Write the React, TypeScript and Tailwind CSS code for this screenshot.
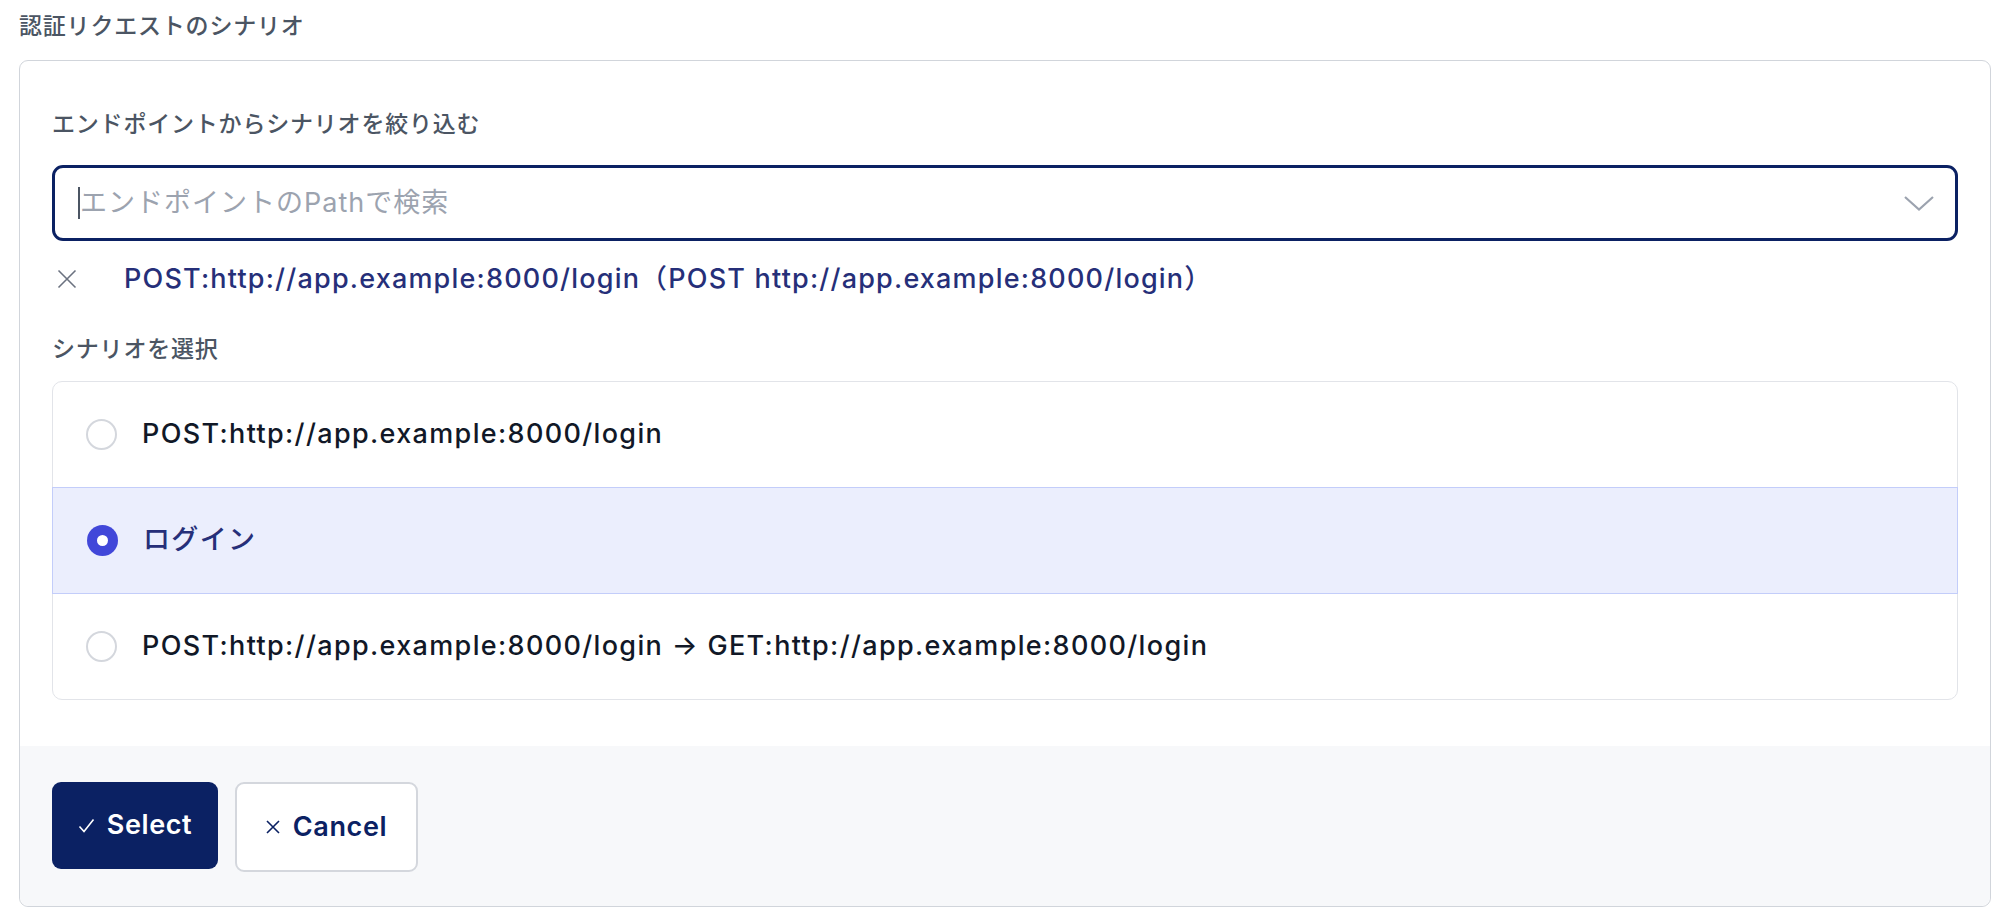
import React from "react";

const FONT = { fontFamily: '"Inter", "Noto Sans CJK JP", sans-serif' };

function Radio({ checked }: { checked: boolean }) {
  if (checked) {
    return (
      <span className="flex h-[31px] w-[31px] shrink-0 items-center justify-center rounded-full bg-[#4147d9]">
        <span className="h-[11px] w-[11px] rounded-full bg-white" />
      </span>
    );
  }
  return <span className="h-[31px] w-[31px] shrink-0 rounded-full border-2 border-[#d4d7dd] bg-white" />;
}

const scenarios = [
  { label: "POST:http://app.example:8000/login", checked: false },
  { label: "ログイン", checked: true },
  { label: "POST:http://app.example:8000/login → GET:http://app.example:8000/login", checked: false },
];

export default function App() {
  return (
    <div className="min-h-[918px] w-[2010px] bg-white pl-[19px] pt-[12px]" style={FONT}>
      <h3 className="mb-[20px] text-[23px] font-medium leading-[28px] tracking-[0.8px] text-[#4b5563]">認証リクエストのシナリオ</h3>

      <div className="w-[1972px] rounded-[9px] border border-[#d1d5db] bg-white">
        <div className="px-[32px] pt-[49px] pb-[46px]">
          <label className="mb-[27px] block text-[23px] font-medium leading-[28px] tracking-[0.8px] text-[#4b5563]">
            エンドポイントからシナリオを絞り込む
          </label>

          <div className="flex h-[76px] items-center rounded-[11px] border-[3px] border-[#0b2163] pl-[23px] pr-[20px]">
            <span className="h-[32px] w-[2px] bg-[#4b5563]" />
            <span className="flex-1 text-[27px] tracking-[1px] text-[#9ca3af]">エンドポイントのPathで検索</span>
            <svg width="32" height="18" viewBox="0 0 32 18" fill="none">
              <path d="M2 3 L16 15.5 L30 3" stroke="#9ca3af" strokeWidth="2.2" />
            </svg>
          </div>

          <div className="mt-[22px] flex h-[32px] items-center">
            <svg width="20" height="20" viewBox="0 0 20 20" className="ml-[5px]" fill="none">
              <path d="M1.5 1.5 L18.5 18.5 M18.5 1.5 L1.5 18.5" stroke="#6b7280" strokeWidth="1.6" />
            </svg>
            <span className="ml-[47px] text-[27px] font-medium tracking-[1.2px] text-[#262f79]">
              POST:http://app.example:8000/login（POST http://app.example:8000/login）
            </span>
          </div>

          <label className="mt-[40px] mb-[18px] block text-[23px] font-medium leading-[28px] tracking-[0.8px] text-[#4b5563]">
            シナリオを選択
          </label>

          <div className="rounded-[10px] border border-[#e2e4e9] bg-white">
            {scenarios.map((s, i) => (
              <div
                key={i}
                className={
                  s.checked
                    ? "-mx-px flex h-[107px] items-center gap-[25px] border border-[#c3cdfa] bg-[#ebeefd] pl-[34px]"
                    : "flex h-[105px] items-center gap-[25px] pl-[33px]"
                }
              >
                <Radio checked={s.checked} />
                <span
                  className={
                    s.checked
                      ? "text-[27px] font-medium tracking-[1.35px] text-[#262f79]"
                      : "text-[27px] font-medium tracking-[1.35px] text-[#111827]"
                  }
                >
                  {s.label}
                </span>
              </div>
            ))}
          </div>
        </div>

        <div className="flex gap-[17px] rounded-b-[9px] bg-[#f7f8fa] px-[32px] pt-[36px] pb-[34px]">
          <button className="flex h-[87px] w-[166px] items-center justify-center gap-[12px] rounded-[9px] bg-[#0b2163] text-[27px] font-semibold tracking-[0.6px] text-white">
            <svg width="17" height="15" viewBox="0 0 17 15" fill="none">
              <path d="M1.5 8.5 L6 13.5 L15.5 1.5" stroke="#ffffff" strokeWidth="1.6" />
            </svg>
            Select
          </button>
          <button className="flex h-[90px] w-[183px] items-center justify-center gap-[13px] rounded-[9px] border-2 border-[#d4d7dd] bg-white text-[27px] font-semibold tracking-[0.6px] text-[#0b2163]">
            <svg width="14" height="14" viewBox="0 0 14 14" fill="none">
              <path d="M1 1 L13 13 M13 1 L1 13" stroke="#0b2163" strokeWidth="1.6" />
            </svg>
            Cancel
          </button>
        </div>
      </div>
    </div>
  );
}
